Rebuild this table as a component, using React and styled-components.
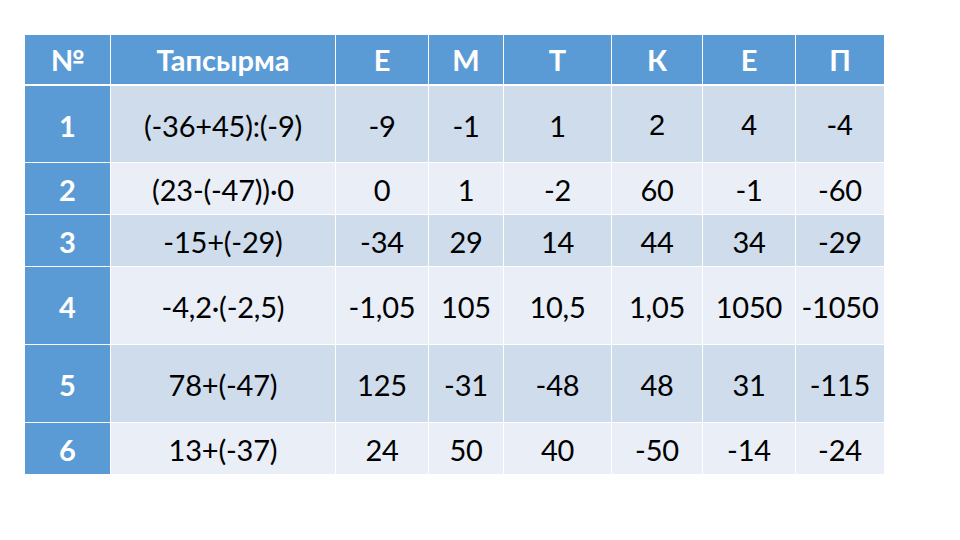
import React from 'react'
import styled, { createGlobalStyle } from 'styled-components'

const Global = createGlobalStyle`
  html, body { margin: 0; padding: 0; background: #ffffff; }
  body { font-family: Lato, "Open Sans", sans-serif; }
`

const COLS = '85px 224px 92px 74px 107px 90px 92px 88px'

const Page = styled.div`
  width: 960px;
  height: 540px;
  padding: 35px 0 0 25px;
  box-sizing: border-box;
  background: #ffffff;
`

const Table = styled.div`
  display: flex;
  flex-direction: column;
  gap: 1px;
  width: 859px;
`

const Row = styled.div`
  display: grid;
  grid-template-columns: ${COLS};
  column-gap: 1px;
  height: ${(p) => p.$h}px;
  margin-bottom: ${(p) => (p.$head ? 1 : 0)}px;
`

const HeadCell = styled.div`
  background: #5b9bd5;
  color: #ffffff;
  font-weight: 700;
  font-size: 29px;
  display: flex;
  align-items: center;
  justify-content: center;
  line-height: 1;
`

const NumCell = styled(HeadCell)`
  padding-top: 2px;
`

const Cell = styled.div`
  background: ${(p) => (p.$alt ? '#e9eef7' : '#cfdcec')};
  color: #000000;
  font-size: 29px;
  font-family: ${(p) => (p.$arial ? '"Liberation Sans", Arial, sans-serif' : 'Lato, sans-serif')};
  display: flex;
  align-items: center;
  justify-content: center;
  padding-top: 2px;
  line-height: 1;
  white-space: nowrap;
  letter-spacing: ${(p) => (p.$arial ? '0' : '-0.2px')};
`

const head = ['№', 'Тапсырма', 'Е', 'М', 'Т', 'К', 'Е', 'П']

const rows = [
  { h: 76, cells: ['(-36+45):(-9)', '-9', '-1', '1', '2', '4', '-4'], arial: [4, 5, 6] },
  { h: 51, cells: ['(23-(-47))·0', '0', '1', '-2', '60', '-1', '-60'] },
  { h: 51, cells: ['-15+(-29)', '-34', '29', '14', '44', '34', '-29'] },
  { h: 77, cells: ['-4,2·(-2,5)', '-1,05', '105', '10,5', '1,05', '1050', '-1050'] },
  { h: 77, cells: ['78+(-47)', '125', '-31', '-48', '48', '31', '-115'] },
  { h: 51, cells: ['13+(-37)', '24', '50', '40', '-50', '-14', '-24'] },
]

export default function App() {
  return (
    <Page>
      <Global />
      <Table>
        <Row $h={49} $head>
          {head.map((t, i) => (
            <HeadCell key={i}>{t}</HeadCell>
          ))}
        </Row>
        {rows.map((r, i) => (
          <Row key={i} $h={r.h}>
            <NumCell>{i + 1}</NumCell>
            {r.cells.map((c, j) => (
              <Cell key={j} $alt={i % 2 === 1} $arial={r.arial && r.arial.includes(j)}>
                {c}
              </Cell>
            ))}
          </Row>
        ))}
      </Table>
    </Page>
  )
}
